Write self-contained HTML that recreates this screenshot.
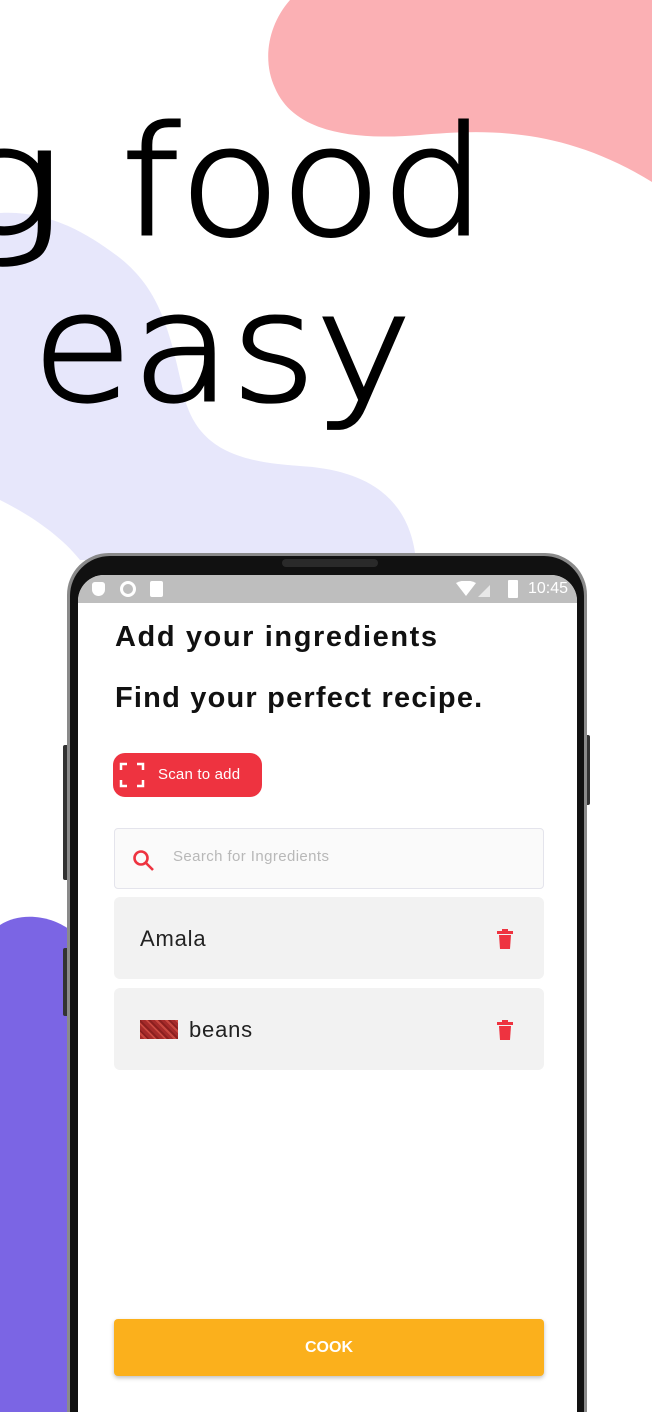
<!DOCTYPE html>
<html style="width:652px;height:1412px;overflow:hidden"><head><meta charset="utf-8"><style>
*{margin:0;padding:0;box-sizing:border-box}
body{width:652px;height:1412px;overflow:hidden;background:#fff;position:relative;font-family:"Liberation Sans",sans-serif}
.ab{position:absolute}
</style></head><body>
<svg class="ab" style="left:0;top:0" width="652" height="560">
<path d="M290 0 C268 25 262 60 275 88 C295 135 360 140 420 135 C480 130 560 125 652 182 L652 0 Z" fill="#fbb0b4"/>
<path d="M0 213 C50 210 90 235 120 258 C160 290 170 330 185 400 C200 450 240 462 300 466 C370 470 410 500 416 560 L80 560 C60 535 30 515 0 500 Z" fill="#e7e7fb"/>
<g transform="scale(1.35,1)" font-family="DejaVu Sans" font-weight="200" font-size="150" fill="#000" stroke="#000" stroke-width="3">
<text x="-42" y="234">g</text>
<text x="90" y="234" textLength="270" lengthAdjust="spacingAndGlyphs">food</text>
<text x="24" y="400" textLength="281" lengthAdjust="spacingAndGlyphs">easy</text>
</g>
</svg>
<svg class="ab" style="left:0;top:900px" width="80" height="512"><path d="M0 25 C20 12 50 15 70 30 L70 512 L0 512 Z" fill="#7b65e4"/></svg>

<!-- phone -->
<div class="ab" style="left:63px;top:745px;width:6px;height:135px;background:#333;border-radius:2px"></div>
<div class="ab" style="left:63px;top:948px;width:6px;height:68px;background:#333;border-radius:2px"></div>
<div class="ab" style="left:584px;top:735px;width:6px;height:70px;background:#333;border-radius:2px"></div>
<div class="ab" style="left:67px;top:553px;width:520px;height:900px;border-radius:42px;background:#8a8a8a;"></div>
<div class="ab" style="left:70px;top:556px;width:514px;height:900px;border-radius:40px;background:#111;"></div>
<div class="ab" style="left:282px;top:559px;width:96px;height:8px;border-radius:4px;background:#2a2a2a"></div>
<div class="ab" style="left:78px;top:575px;width:499px;height:900px;border-radius:26px 26px 0 0;background:#fff;overflow:hidden">
  <div style="height:28px;background:#bebebe;position:relative;color:#fff;font-size:15px">
    <div class="ab" style="left:14px;top:7px;width:13px;height:14px;background:#fff;border-radius:3px 3px 7px 7px"></div>
    <div class="ab" style="left:42px;top:6px;width:16px;height:16px;border:3px solid #fff;border-radius:50%"></div>
    <div class="ab" style="left:72px;top:6px;width:13px;height:16px;background:#fff;border-radius:2px"></div>
    <svg class="ab" style="left:378px;top:6px" width="40" height="17"><path d="M0 2 Q10 -3 20 2 L10 15Z" fill="#fff"/><path d="M22 16 L34 4 L34 16Z" fill="#e8e8e8"/></svg>
    <div class="ab" style="left:430px;top:5px;width:10px;height:18px;background:#fff;border-radius:1px"></div>
    <div class="ab" style="left:450px;top:5px;font-size:16px">10:45</div>
  </div>
  <div class="ab" style="left:37px;top:46px;font-size:29px;font-weight:bold;color:#111;letter-spacing:1.6px;white-space:nowrap">Add your ingredients</div>
  <div class="ab" style="left:37px;top:107px;font-size:29px;font-weight:bold;color:#111;letter-spacing:1.2px;white-space:nowrap">Find your perfect recipe.</div>
  <div class="ab" style="left:35px;top:178px;width:149px;height:44px;background:#ee3340;border-radius:12px;color:#fff;font-size:15px">
    <svg class="ab" style="left:6px;top:9px" width="26" height="26" fill="none" stroke="#fff" stroke-width="2.5"><path d="M2 8V2H8M18 2H24V8M24 18V24H18M8 24H2V18"/></svg>
    <div class="ab" style="left:45px;top:13px;letter-spacing:0.2px;white-space:nowrap">Scan to add</div>
  </div>
  <div class="ab" style="left:36px;top:253px;width:430px;height:61px;background:#fafafa;border:1px solid #e4e4ec;border-radius:4px">
    <svg class="ab" style="left:17px;top:20px" width="24" height="24" fill="none" stroke="#ee3340" stroke-width="2.6"><circle cx="9" cy="9" r="6.5"/><path d="M14 14L21 21"/></svg>
    <div class="ab" style="left:58px;top:19px;font-size:15px;color:#b8b8b8;letter-spacing:0.4px;white-space:nowrap">Search for Ingredients</div>
  </div>
  <div class="ab" style="left:36px;top:322px;width:430px;height:82px;background:#f2f2f2;border-radius:6px">
    <div class="ab" style="left:26px;top:29px;font-size:22px;color:#222;letter-spacing:0.8px">Amala</div>
    <svg class="ab" style="left:383px;top:32px" width="16" height="20"><rect x="0" y="2" width="16" height="3" fill="#ee3340"/><rect x="5" y="0" width="6" height="3" fill="#ee3340"/><path d="M2 6H14L13 20H3Z" fill="#ee3340"/></svg>
  </div>
  <div class="ab" style="left:36px;top:413px;width:430px;height:82px;background:#f2f2f2;border-radius:6px">
    <div class="ab" style="left:26px;top:32px;width:38px;height:19px;background:repeating-linear-gradient(45deg,#a52a2a 0 3px,#c8473f 3px 5px,#8b1f1f 5px 7px)"></div>
    <div class="ab" style="left:75px;top:29px;font-size:22px;color:#222;letter-spacing:0.8px">beans</div>
    <svg class="ab" style="left:383px;top:32px" width="16" height="20"><rect x="0" y="2" width="16" height="3" fill="#ee3340"/><rect x="5" y="0" width="6" height="3" fill="#ee3340"/><path d="M2 6H14L13 20H3Z" fill="#ee3340"/></svg>
  </div>
  <div class="ab" style="left:36px;top:744px;width:430px;height:57px;background:#fbb01c;border-radius:4px;box-shadow:0 2px 4px rgba(0,0,0,.25);color:#fff;font-weight:bold;font-size:16px;text-align:center;line-height:57px">COOK</div>
</div>
</body></html>
